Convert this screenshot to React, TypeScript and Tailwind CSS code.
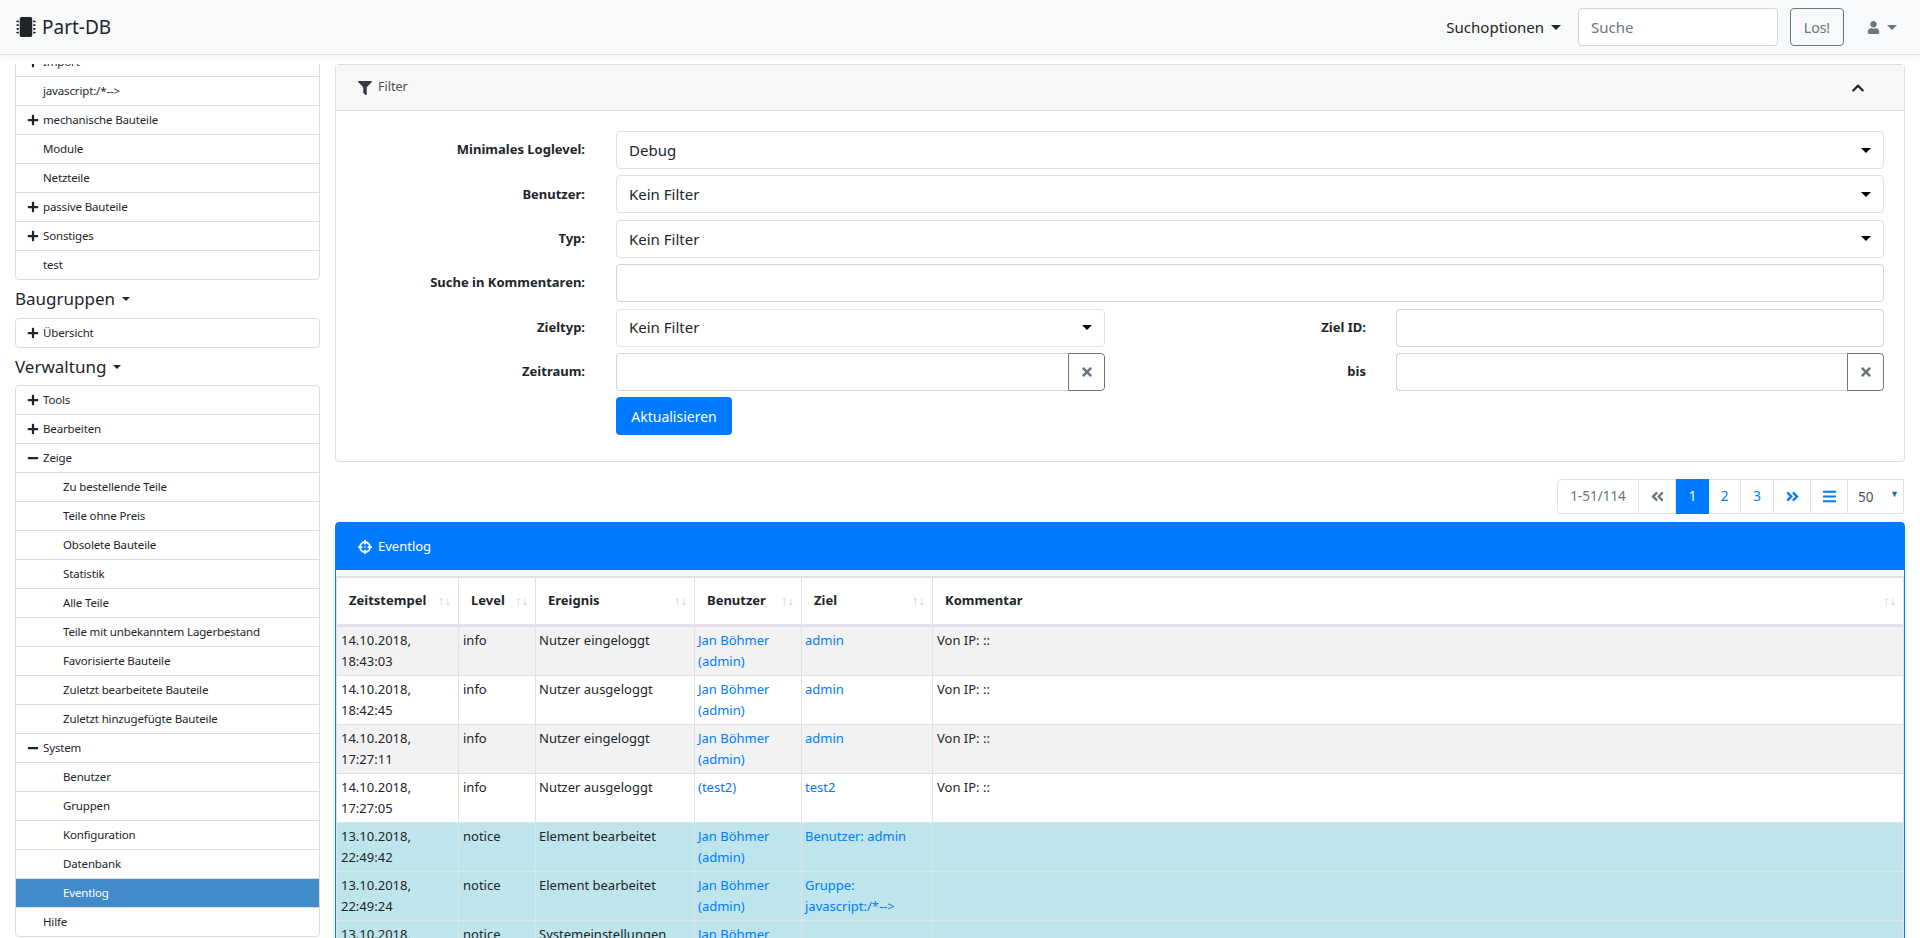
import type { ReactNode } from 'react';
import {
  FaAngleDoubleLeft,
  FaAngleDoubleRight,
  FaBars,
  FaChevronUp,
  FaCrosshairs,
  FaFilter,
  FaMicrochip,
  FaMinus,
  FaPlus,
  FaTimes,
  FaUser,
} from 'react-icons/fa';

type TreeRow = { label: string; level?: number; mark?: 'plus' | 'minus'; active?: boolean };

const partRows: TreeRow[] = [
  { label: 'Import', mark: 'plus' },
  { label: 'javascript:/*-->' },
  { label: 'mechanische Bauteile', mark: 'plus' },
  { label: 'Module' },
  { label: 'Netzteile' },
  { label: 'passive Bauteile', mark: 'plus' },
  { label: 'Sonstiges', mark: 'plus' },
  { label: 'test' },
];

const toolRows: TreeRow[] = [
  { label: 'Tools', mark: 'plus' },
  { label: 'Bearbeiten', mark: 'plus' },
  { label: 'Zeige', mark: 'minus' },
  { label: 'Zu bestellende Teile', level: 1 },
  { label: 'Teile ohne Preis', level: 1 },
  { label: 'Obsolete Bauteile', level: 1 },
  { label: 'Statistik', level: 1 },
  { label: 'Alle Teile', level: 1 },
  { label: 'Teile mit unbekanntem Lagerbestand', level: 1 },
  { label: 'Favorisierte Bauteile', level: 1 },
  { label: 'Zuletzt bearbeitete Bauteile', level: 1 },
  { label: 'Zuletzt hinzugefügte Bauteile', level: 1 },
  { label: 'System', mark: 'minus' },
  { label: 'Benutzer', level: 1 },
  { label: 'Gruppen', level: 1 },
  { label: 'Konfiguration', level: 1 },
  { label: 'Datenbank', level: 1 },
  { label: 'Eventlog', level: 1, active: true },
  { label: 'Hilfe' },
];

const logRows = [
  { date: '14.10.2018,', time: '18:43:03', level: 'info', event: 'Nutzer eingeloggt', user: 'Jan Böhmer (admin)', target: 'admin', comment: 'Von IP: ::', bg: 'bg-[#f2f2f2]' },
  { date: '14.10.2018,', time: '18:42:45', level: 'info', event: 'Nutzer ausgeloggt', user: 'Jan Böhmer (admin)', target: 'admin', comment: 'Von IP: ::', bg: 'bg-white' },
  { date: '14.10.2018,', time: '17:27:11', level: 'info', event: 'Nutzer eingeloggt', user: 'Jan Böhmer (admin)', target: 'admin', comment: 'Von IP: ::', bg: 'bg-[#f2f2f2]' },
  { date: '14.10.2018,', time: '17:27:05', level: 'info', event: 'Nutzer ausgeloggt', user: '(test2)', target: 'test2', comment: 'Von IP: ::', bg: 'bg-white' },
  { date: '13.10.2018,', time: '22:49:42', level: 'notice', event: 'Element bearbeitet', user: 'Jan Böhmer (admin)', target: 'Benutzer: admin', comment: '', bg: 'bg-[#bee5eb]' },
  { date: '13.10.2018,', time: '22:49:24', level: 'notice', event: 'Element bearbeitet', user: 'Jan Böhmer (admin)', target: 'Gruppe: javascript:/*-->', comment: '', bg: 'bg-[#bee5eb]' },
  { date: '13.10.2018,', time: '22:48:10', level: 'notice', event: 'Systemeinstellungen geändert', user: 'Jan Böhmer (admin)', target: '', comment: '', bg: 'bg-[#bee5eb]' },
];

const columns = [
  { title: 'Zeitstempel', width: 'w-[122px]' },
  { title: 'Level', width: 'w-[77px]' },
  { title: 'Ereignis', width: 'w-[159px]' },
  { title: 'Benutzer', width: 'w-[107px]' },
  { title: 'Ziel', width: 'w-[131px]' },
  { title: 'Kommentar', width: 'w-auto' },
];

const Caret = ({ className = 'border-t-[#212529]' }: { className?: string }) => (
  <span className={`inline-block w-0 h-0 border-x-[5px] border-t-[5px] border-x-transparent ${className}`} />
);

const Tree = ({ rows }: { rows: TreeRow[] }) => (
  <ul className="shrink-0 rounded border border-[#dddddd] bg-white">
    {rows.map((row, i) => (
      <li
        key={row.label}
        className={`relative flex items-center text-[11.5px] tracking-[-0.15px] ${
          i > 0 ? 'h-[29px] border-t border-[#dddddd]' : 'h-[28px]'
        } ${row.level ? 'pl-[47px]' : 'pl-[27px]'} ${row.active ? 'border-[#357ebd] bg-[#428bca] text-white' : 'text-[#212529]'}`}
      >
        {row.mark === 'plus' && <FaPlus className="absolute left-[10.5px] top-[8px] text-[12px]" />}
        {row.mark === 'minus' && <FaMinus className="absolute left-[10.5px] top-[8px] text-[12px]" />}
        {row.label}
      </li>
    ))}
  </ul>
);

const SideHeading = ({ children, height }: { children: ReactNode; height: string }) => (
  <div className={`shrink-0 flex items-center gap-[7px] text-[17px] text-[#212529] ${height}`}>
    {children}
    <span className="inline-block h-0 w-0 border-x-[4px] border-t-[4px] border-x-transparent border-t-[#212529]" />
  </div>
);

const Select = ({ value, className = 'flex-1' }: { value: string; className?: string }) => (
  <button
    type="button"
    className={`flex items-center justify-between h-[38px] pl-[12px] pr-[12px] rounded border border-[#dee2e6] bg-white text-[15px] text-[#212529] ${className}`}
  >
    {value}
    <Caret className="border-t-black" />
  </button>
);

const Field = ({ label, children }: { label: string; children: ReactNode }) => (
  <div className="flex items-center h-[38px] gap-[31px]">
    <label className="w-[249px] text-right text-[13px] font-bold text-[#212529]">{label}</label>
    {children}
  </div>
);

const ClearableInput = ({ className }: { className: string }) => (
  <div className={`flex h-[38px] ${className}`}>
    <input className="min-w-0 flex-1 rounded-l border border-r-0 border-[#ced4da] bg-white" />
    <button type="button" className="flex w-[37px] items-center justify-center rounded-r border border-[#6c757d] text-[#6c757d]">
      <FaTimes className="text-[14px]" />
    </button>
  </div>
);

const Pager = () => {
  const cell = 'flex items-center border border-l-0 border-[#dee2e6] bg-white text-[13.5px]';
  return (
    <div className="flex h-[35px] justify-end mt-[17px] mr-[1px]">
      <span className="flex w-[82px] items-center justify-center rounded-l border border-[#dee2e6] bg-white text-[13.5px] text-[#6c757d]">1-51/114</span>
      <span className={`${cell} w-[37px] justify-center text-[#6c757d]`}><FaAngleDoubleLeft className="text-[15px]" /></span>
      <span className="flex w-[33px] items-center justify-center bg-[#007bff] text-[13.5px] text-white">1</span>
      <span className={`${cell} w-[32px] justify-center text-[#007bff]`}>2</span>
      <span className={`${cell} w-[33px] justify-center text-[#007bff]`}>3</span>
      <span className={`${cell} w-[37px] justify-center text-[#007bff]`}><FaAngleDoubleRight className="text-[15px]" /></span>
      <span className={`${cell} w-[37px] justify-center text-[#007bff]`}><FaBars className="text-[15px]" /></span>
      <span className={`${cell} w-[56px] justify-between pl-[10px] pr-[4px] text-[#495057]`}>
        <span className="pt-[2px]">50</span>
        <span className="mb-[6px] text-[9px] text-[#2c6aa0]">▼</span>
      </span>
    </div>
  );
};

const LogTable = () => (
  <table className="w-full table-fixed border-collapse text-[13px] leading-[21px] text-[#212529]">
    <thead>
      <tr>
        {columns.map((col) => (
          <th
            key={col.title}
            className={`relative h-[48px] border-x border-t-2 border-b-[3px] border-[#dee2e6] pl-[12px] text-left font-bold ${col.width}`}
          >
            {col.title}
            <span className="absolute right-[7px] top-[12px] text-[13px] font-normal text-[#c8c8c8]">↑↓</span>
          </th>
        ))}
      </tr>
    </thead>
    <tbody>
      {logRows.map((row) => (
        <tr key={row.time} className={`${row.bg} align-top`}>
          <td className="border border-[#dee2e6] px-[4px] py-[3px]">{row.date}<br />{row.time}</td>
          <td className="border border-[#dee2e6] px-[4px] py-[3px]">{row.level}</td>
          <td className="border border-[#dee2e6] px-[3px] py-[3px]">{row.event}</td>
          <td className="border border-[#dee2e6] px-[3px] py-[3px] text-[#007bff]">{row.user}</td>
          <td className="border border-[#dee2e6] px-[3px] py-[3px] text-[#007bff]">{row.target}</td>
          <td className="border border-[#dee2e6] px-[4px] py-[3px]">{row.comment}</td>
        </tr>
      ))}
    </tbody>
  </table>
);

export default function App() {
  return (
    <div className="flex h-screen flex-col overflow-hidden bg-white font-['Noto_Sans',sans-serif]">
      {/* Navigation */}
      <nav className="relative z-10 flex h-[55px] shrink-0 items-center border-b border-[#dfe2e6] bg-[#f8f9fa] pl-[16px] shadow-[0_2px_6px_rgba(0,0,0,0.06)]">
        <FaMicrochip className="text-[20px] text-[#212529]" />
        <span className="ml-[6px] text-[19px] text-[#212529]">Part-DB</span>
        <div className="ml-auto flex items-center">
          <span className="text-[15px] text-[#212529]">Suchoptionen</span>
          <Caret className="ml-[7px] border-t-[#212529]" />
          <input
            placeholder="Suche"
            className="ml-[17px] h-[38px] w-[200px] rounded border border-[#ced4da] bg-white px-[12px] text-[15px] placeholder:text-[#6c757d]"
          />
          <button type="button" className="ml-[12px] h-[38px] w-[54px] rounded border border-[#6c757d] text-[14px] text-[#6c757d]">
            Los!
          </button>
          <FaUser className="ml-[23px] text-[13px] text-[#6c757d]" />
          <Caret className="ml-[7px] mr-[23px] border-t-[#6c757d]" />
        </div>
      </nav>

      <div className="flex min-h-0 flex-1 pt-[9px]">
        {/* Sidebar, scrolled to its bottom */}
        <aside className="flex w-[335px] shrink-0 flex-col justify-end overflow-hidden pb-[1px] pl-[15px] pr-[15px]">
          <Tree rows={partRows} />
          <SideHeading height="h-[38px]">Baugruppen</SideHeading>
          <Tree rows={[{ label: 'Übersicht', mark: 'plus' }]} />
          <SideHeading height="h-[37px]">Verwaltung</SideHeading>
          <Tree rows={toolRows} />
        </aside>

        <main className="min-w-0 flex-1 pr-[15px]">
          {/* Filter */}
          <section className="rounded border border-[#dfdfdf]">
            <header className="flex h-[46px] items-center border-b border-[#dfdfdf] bg-[#f7f7f7] pl-[22px] pr-[39px] text-[12.5px] text-[#495057]">
              <FaFilter className="mr-[6px] text-[14px] text-[#343a40]" />
              Filter
              <FaChevronUp className="ml-auto text-[14px] text-[#212529]" />
            </header>
            <div className="flex h-[350px] flex-col gap-[6.4px] pt-[20px] pr-[20px]">
              <Field label="Minimales Loglevel:"><Select value="Debug" /></Field>
              <Field label="Benutzer:"><Select value="Kein Filter" /></Field>
              <Field label="Typ:"><Select value="Kein Filter" /></Field>
              <Field label="Suche in Kommentaren:">
                <input className="h-[38px] flex-1 rounded border border-[#ced4da] bg-white" />
              </Field>
              <Field label="Zieltyp:">
                <Select value="Kein Filter" className="w-[489px]" />
                <label className="ml-[-31px] w-[261px] text-right text-[13px] font-bold text-[#212529]">Ziel ID:</label>
                <input className="ml-[-1px] h-[38px] flex-1 rounded border border-[#ced4da] bg-white" />
              </Field>
              <Field label="Zeitraum:">
                <ClearableInput className="w-[489px]" />
                <label className="ml-[-31px] w-[261px] text-right text-[13px] font-bold text-[#212529]">bis</label>
                <ClearableInput className="ml-[-1px] flex-1" />
              </Field>
              <div className="pl-[280px]">
                <button type="button" className="h-[38px] w-[116px] rounded bg-[#007bff] text-[14px] text-white">Aktualisieren</button>
              </div>
            </div>
          </section>

          <Pager />

          {/* Event log */}
          <section className="mt-[8px] h-[500px] rounded-t border border-[#007bff] bg-white">
            <header className="flex h-[47px] items-center bg-[#007bff] pl-[22px] text-[13px] text-white">
              <FaCrosshairs className="mr-[6px] text-[14px]" />
              Eventlog
            </header>
            <div className="pt-[6px]">
              <LogTable />
            </div>
          </section>
        </main>
      </div>
    </div>
  );
}
